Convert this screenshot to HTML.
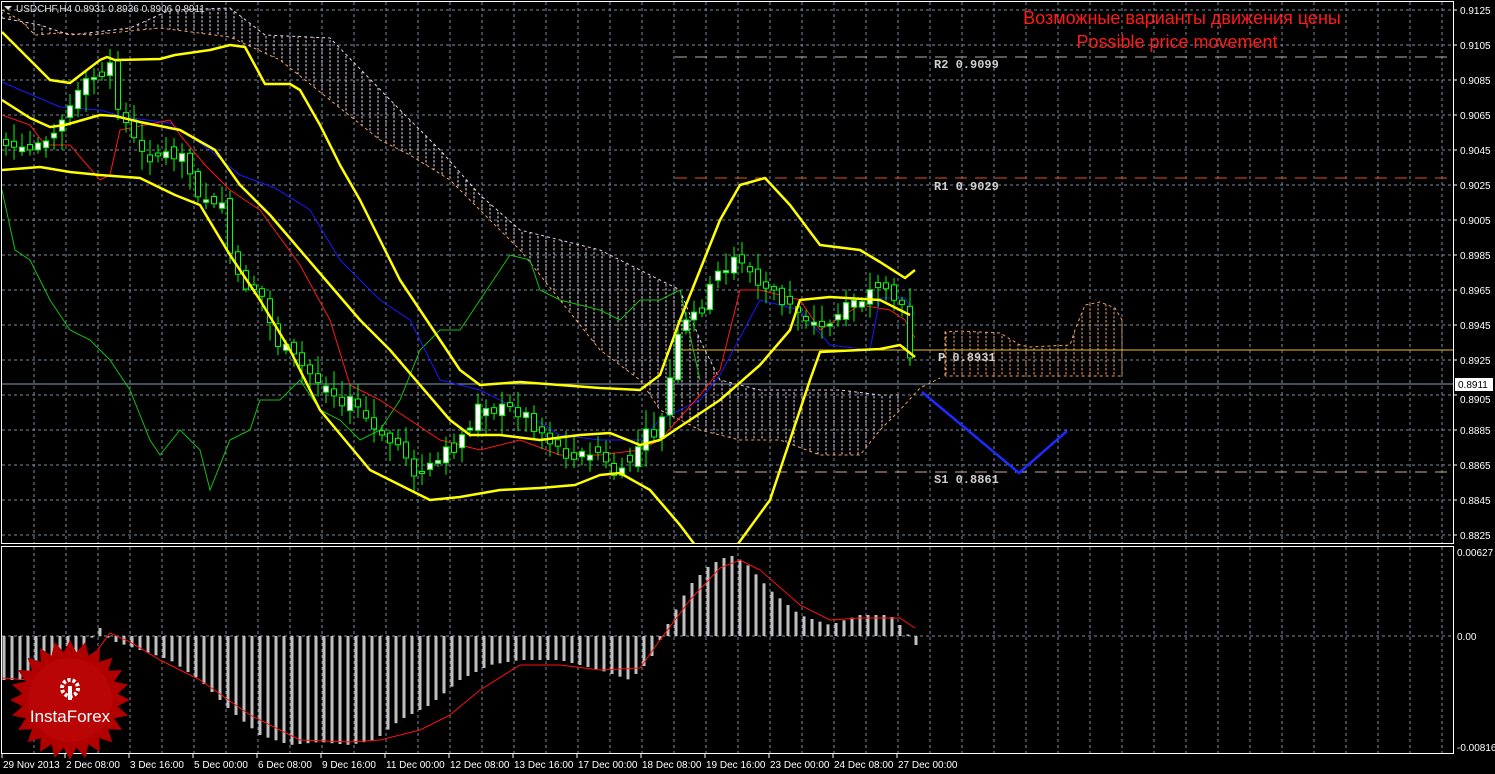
<!DOCTYPE html>
<html><head><meta charset="utf-8"><style>
html,body{margin:0;padding:0;background:#000;width:1495px;height:774px;overflow:hidden}
svg{display:block}
text{font-family:"Liberation Sans",sans-serif}
.ax{fill:#fff;font-size:10px}
.tm{fill:#fff;font-size:10px}
.lv{fill:#d0d0d0;font-family:"Liberation Mono",monospace;font-size:12px;font-weight:bold}
</style></head><body>
<svg id="s" width="1495" height="774" viewBox="0 0 1495 774" xmlns="http://www.w3.org/2000/svg">
<defs>
<pattern id="hw" width="8" height="4" patternUnits="userSpaceOnUse"><line x1="2" y1="0" x2="2" y2="2.5" stroke="#e8d0e8" stroke-width="1"/></pattern>
<pattern id="ho" width="8" height="4" patternUnits="userSpaceOnUse"><line x1="2" y1="0" x2="2" y2="2.5" stroke="#f0a060" stroke-width="1"/></pattern>
<clipPath id="cm"><rect x="2" y="2" width="1451" height="541"/></clipPath>
<clipPath id="cd"><rect x="2" y="547" width="1451" height="206"/></clipPath>
</defs>
<rect x="0" y="0" width="1495" height="774" fill="#000"/>
<g id="grid" stroke="#7a8a9a" stroke-dasharray="3,3" stroke-width="1"></g>
<rect x="1.5" y="1.5" width="1452" height="542" fill="none" stroke="#fff"/>
<rect x="1.5" y="546.5" width="1452" height="207" fill="none" stroke="#fff"/>
<g clip-path="url(#cm)">
<polygon fill="url(#hw)" stroke="none" points="2,18 40,25 70,35 130,28 170,10 230,8 265,35 330,38 400,110 440,150 480,195 520,230 560,240 600,250 640,270 680,290 700,340 720,380 760,390 800,390 840,390 880,395 900,395 900,410 880,430 860,455 820,455 780,440 740,440 700,430 660,410 640,380 600,350 560,300 520,250 480,210 450,180 410,155 380,140 330,100 280,60 230,37 160,28 90,35 60,33 35,35 20,20 2,10"/>
<polyline fill="none" stroke="#e8d0e8" stroke-dasharray="3,3" points="2,18 40,25 70,35 130,28 170,10 230,8 265,35 330,38 400,110 440,150 480,195 520,230 560,240 600,250 640,270 680,290 700,340 720,380 760,390 800,390 840,390 880,395 900,395"/>
<polyline fill="none" stroke="#f0a060" stroke-dasharray="3,3" points="2,10 20,20 35,35 60,33 90,35 160,28 230,37 280,60 330,100 380,140 410,155 450,180 480,210 520,250 560,300 600,350 640,380 660,410 700,430 740,440 780,440 820,455 860,455 880,430 900,410 920,388 940,378"/>
<polygon fill="url(#ho)" points="945,332 960,331 1000,333 1020,345 1030,347 1070,345 1075,330 1085,305 1100,302 1115,308 1122,320 1122,376 945,376 940,375"/>
<polyline fill="none" stroke="#f0a060" stroke-dasharray="3,3" points="945,376 945,332 960,331 1000,333 1020,345 1030,347 1070,345 1075,330 1085,305 1100,302 1115,308 1122,320 1122,376 945,376"/>
<line x1="675" y1="57" x2="1453" y2="57" stroke="#b0b0b0" stroke-dasharray="12,8"/>
<line x1="675" y1="178" x2="1453" y2="178" stroke="#e8501e" stroke-dasharray="12,8"/>
<line x1="675" y1="472" x2="1453" y2="472" stroke="#d0a8a0" stroke-dasharray="12,8"/>
<line x1="675" y1="350" x2="1453" y2="350" stroke="#f0c020"/>
<line x1="2" y1="384" x2="1453" y2="384" stroke="#8aa0b8"/>
<polyline fill="none" stroke="#10c010" points="2,190 15,250 30,260 50,300 70,330 90,340 110,360 130,390 150,440 160,455 180,430 200,450 210,490 230,440 250,430 260,400 280,400 300,380 320,410 340,420 360,440 380,430 400,400 420,350 440,330 460,330 480,300 500,270 510,255 530,260 540,290 560,300 600,310 620,320 640,300 660,300 680,290 700,380"/>
<polyline fill="none" stroke="#1818ff" points="2,82 25,92 60,107 100,110 125,117 170,123 210,150 240,175 275,188 310,210 340,260 380,300 410,320 440,380 480,390 520,410 560,435 600,440 640,440 660,420 700,400 720,375 760,300 800,310 830,345 870,350 880,298 905,298 915,315"/>
<polyline fill="none" stroke="#ff1818" points="2,115 30,125 45,145 70,145 100,180 110,175 120,130 170,120 180,135 205,165 230,190 260,210 300,265 330,320 350,385 380,400 410,420 440,440 480,450 520,440 560,455 600,455 640,450 660,440 700,395 720,370 740,290 760,290 800,300 820,330 860,305 890,310 905,320 915,338"/>
<g id="candles"></g>
<g fill="none" stroke="#ffff00" stroke-width="2.5" stroke-linejoin="round">
<polyline points="2,32 25,55 50,80 70,83 100,60 107,57 115,60 160,59 175,55 210,50 230,45 245,47 265,84 290,84 300,90 320,125 340,165 360,200 380,240 400,280 420,310 440,340 460,370 480,385 520,382 560,385 600,388 640,390 660,375 680,320 700,270 720,220 740,185 765,178 790,205 820,245 860,250 880,262 905,278 915,270"/>
<polyline points="2,100 30,118 50,127 65,125 100,115 115,116 140,122 180,130 215,150 240,185 270,215 300,250 330,285 360,320 390,350 420,385 450,420 470,435 500,435 540,440 580,435 610,433 640,445 660,440 690,420 720,400 760,365 790,330 800,300 830,297 880,300 910,315"/>
<polyline points="2,170 40,167 70,172 100,175 140,178 175,195 200,205 230,255 260,300 290,350 320,410 345,440 370,470 400,485 430,500 460,497 500,490 540,488 575,485 600,475 620,473 650,490 680,525 695,545"/>
<polyline points="735,548 770,500 790,440 810,380 820,352 880,349 900,345 915,357"/>
</g>
<polyline fill="none" stroke="#1c2bff" stroke-width="2.5" points="922,392 1019,473 1067,431"/>
</g>
<g clip-path="url(#cd)"><g id="macd"></g>
<polyline fill="none" stroke="#ff1010" points="2,678 30,680 60,676 90,660 110,633 130,642 160,660 200,680 250,715 300,740 350,742 380,740 420,730 450,715 480,690 520,665 560,665 600,670 640,668 660,640 690,600 720,568 740,560 760,570 800,605 830,620 860,618 900,618 915,628"/>
</g>
<g id="axis"></g>
<text x="16" y="12" fill="#e0e0e0" font-size="10">USDCHF,H4  0.8931 0.8936 0.8906 0.8911</text>
<polygon points="4,6 12,6 8,10" fill="#e0e0e0"/>
<text x="1182" y="24" fill="#ff1a1a" font-size="18" text-anchor="middle">Возможные варианты движения цены</text>
<text x="1177" y="48" fill="#ff1a1a" font-size="18" text-anchor="middle">Possible price movement</text>
<text class="lv" x="934" y="68">R2 0.9099</text>
<text class="lv" x="934" y="190">R1 0.9029</text>
<text class="lv" x="938" y="361">P  0.8931</text>
<text class="lv" x="934" y="483">S1 0.8861</text>
<rect x="1455" y="378" width="38" height="13" fill="#fff"/>
<text x="1458" y="388" fill="#000" font-size="10">0.8911</text>
<g transform="translate(70,700)">
<polygon id="star" fill="#b00000"/>
<circle r="42" fill="#c00808" opacity="0.6"/>
<circle cx="0" cy="-12" r="8" fill="none" stroke="#fff" stroke-width="4" stroke-dasharray="3,2"/>
<rect x="-2" y="-14" width="4" height="14" fill="#fff"/>
<text x="0" y="22" fill="#fff" font-size="17" text-anchor="middle">InstaForex</text>
</g>
</svg>
<script>
(function(){
var NS="http://www.w3.org/2000/svg";
function el(p,t,a){var e=document.createElementNS(NS,t);for(var k in a)e.setAttribute(k,a[k]);p.appendChild(e);return e;}
var g=document.getElementById('grid');
for(var x=34;x<1453;x+=32){el(g,'line',{x1:x,y1:2,x2:x,y2:543});el(g,'line',{x1:x,y1:547,x2:x,y2:753});}
for(var k=0;k<16;k++){var y=10+35*k;el(g,'line',{x1:2,y1:y,x2:1453,y2:y});}
el(g,'line',{x1:2,y1:636,x2:1453,y2:636});
var ax=document.getElementById('axis');
var pr=['0.9125','0.9105','0.9085','0.9065','0.9045','0.9025','0.9005','0.8985','0.8965','0.8945','0.8925','0.8905','0.8885','0.8865','0.8845','0.8825'];
for(var k=0;k<16;k++){var y=10+35*k+(k==11?4:0);el(ax,'line',{x1:1453,y1:10+35*k,x2:1457,y2:10+35*k,stroke:'#fff'});var t=el(ax,'text',{x:1460,y:y+4,'class':'ax'});t.textContent=pr[k];}
[['0.00627',556],['0.00',640],['-0.00816',751]].forEach(function(a){var t=el(ax,'text',{x:1457,y:a[1],'class':'ax'});t.textContent=a[0];});
var tl=['29 Nov 2013','2 Dec 08:00','3 Dec 16:00','5 Dec 00:00','6 Dec 08:00','9 Dec 16:00','11 Dec 00:00','12 Dec 08:00','13 Dec 16:00','17 Dec 00:00','18 Dec 08:00','19 Dec 16:00','23 Dec 00:00','24 Dec 08:00','27 Dec 00:00'];
tl.forEach(function(s,i){var x=2+64*i;if(i>0)x=65+64*(i-1);el(ax,'line',{x1:x,y1:754,x2:x,y2:758,stroke:'#fff'});var t=el(ax,'text',{x:x+1,y:768,'class':'tm'});t.textContent=s;});
function interp(pts,x){for(var i=0;i<pts.length-1;i++){if(x>=pts[i][0]&&x<=pts[i+1][0]){var f=(x-pts[i][0])/(pts[i+1][0]-pts[i][0]);return pts[i][1]+f*(pts[i+1][1]-pts[i][1]);}}return pts[pts.length-1][1];}
var cp=[[2,145],[30,150],[60,120],[90,80],[110,70],[120,110],[140,155],[160,155],[180,150],[200,195],[220,200],[235,280],[260,290],[275,340],[300,365],[330,390],[360,410],[380,440],[400,445],[420,480],[440,460],[460,440],[480,405],[500,410],[520,410],[540,430],[560,450],[580,455],[600,460],[620,480],[640,440],[660,430],[680,330],[700,310],[720,270],[740,255],[760,290],[780,300],[800,310],[820,330],[840,315],[860,300],[880,295],[900,300],[915,382]];
var cg=document.getElementById('candles');var seed=7;function rnd(){seed=(seed*9301+49297)%233280;return seed/233280;}
var prev=interp(cp,2);
for(var x=6;x<=916;x+=8){var c=interp(cp,x)+(rnd()-0.5)*16;var o=prev+(rnd()-0.5)*10;if(Math.abs(c-o)<3)o=c+(rnd()-0.5)*16;var hi=Math.min(o,c)-3-rnd()*16,lo=Math.max(o,c)+3+rnd()*16;
el(cg,'line',{x1:x,y1:hi,x2:x,y2:lo,stroke:'#00ff00'});var bt=Math.min(o,c),h=Math.max(2,Math.abs(o-c));var bull=c<o;
el(cg,'rect',{x:x-2.5,y:bt,width:5,height:h,fill:bull?'#fff':'#000',stroke:'#00ff00','stroke-width':1});prev=c;}
var mp=[[2,680],[30,680],[60,670],[90,640],[100,628],[110,640],[140,650],[170,660],[200,680],[230,710],[260,735],[290,745],[320,742],[350,745],[375,740],[400,720],[430,705],[460,680],[490,665],[520,660],[560,660],[600,670],[630,680],[650,660],[670,620],[690,585],[710,565],[730,555],[745,562],[770,590],[800,615],[830,625],[860,615],[890,615],[905,630],[915,645]];
var mg=document.getElementById('macd');
for(var x=4;x<=916;x+=8){var v=interp(mp,x);var y1=Math.min(v,636),h=Math.abs(v-636);el(mg,'rect',{x:x-1.5,y:y1,width:3,height:Math.max(1,h),fill:'#c0c0c0'});}
var st=[];for(var i=0;i<48;i++){var a=i*Math.PI/24;var r=i%2?48:60;st.push((r*Math.sin(a)).toFixed(1)+','+(-r*Math.cos(a)).toFixed(1));}
document.getElementById('star').setAttribute('points',st.join(' '));
})();
</script>
</body></html>
